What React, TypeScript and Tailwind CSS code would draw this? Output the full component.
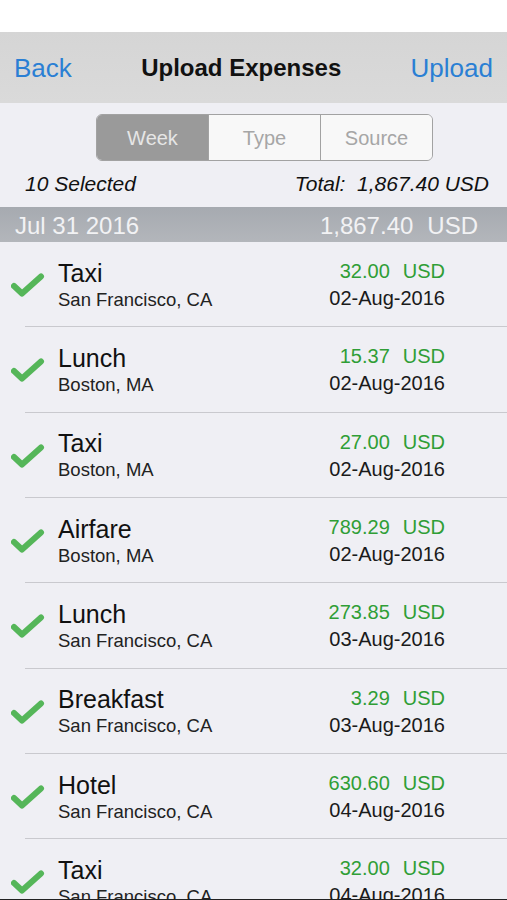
import React from "react";

const rows = [
  { t: "Taxi", s: "San Francisco, CA", a: "32.00", d: "02-Aug-2016" },
  { t: "Lunch", s: "Boston, MA", a: "15.37", d: "02-Aug-2016" },
  { t: "Taxi", s: "Boston, MA", a: "27.00", d: "02-Aug-2016" },
  { t: "Airfare", s: "Boston, MA", a: "789.29", d: "02-Aug-2016" },
  { t: "Lunch", s: "San Francisco, CA", a: "273.85", d: "03-Aug-2016" },
  { t: "Breakfast", s: "San Francisco, CA", a: "3.29", d: "03-Aug-2016" },
  { t: "Hotel", s: "San Francisco, CA", a: "630.60", d: "04-Aug-2016" },
  { t: "Taxi", s: "San Francisco, CA", a: "32.00", d: "04-Aug-2016" },
];

function Check() {
  return (
    <svg width="34" height="24" viewBox="0 0 34 24" className="block">
      <path
        d="M3 13 L11 20.5 L30 3.5"
        fill="none"
        stroke="#55b659"
        strokeWidth="6"
        strokeLinecap="round"
        strokeLinejoin="round"
      />
    </svg>
  );
}

export default function App() {
  return (
    <div
      className="relative w-[507px] h-[900px] overflow-hidden bg-[#efeff4] flex flex-col"
      style={{ fontFamily: '"Liberation Sans", Arial, sans-serif' }}
    >
      <div className="h-[32px] bg-white shrink-0" />
      <div className="h-[71px] shrink-0 flex items-center bg-gradient-to-b from-[#d5d5d5] to-[#dadada] pl-[14px] pr-[14px]">
        <span className="text-[26px] leading-[30px] text-[#2a7fd4]">Back</span>
        <span className="flex-1 text-center text-[24px] leading-[30px] font-bold text-[#111] pt-[1px]">
          Upload Expenses
        </span>
        <span className="text-[26px] leading-[30px] text-[#2a7fd4]">Upload</span>
      </div>

      <div className="shrink-0 flex pl-[96px] pt-[11px]">
        <div className="w-[337px] h-[47px] flex rounded-[6px] border-[1.5px] border-[#a2a2a2] overflow-hidden">
          <div className="w-[111px] flex items-center justify-center bg-[#9a9a9a] text-[20px] leading-[24px] text-[#e6e6e6]">
            Week
          </div>
          <div className="flex-1 flex items-center justify-center bg-[#f8f8f8] border-l-[1.5px] border-[#a2a2a2] text-[20px] leading-[24px] text-[#a6a6a6]">
            Type
          </div>
          <div className="flex-1 flex items-center justify-center bg-[#f8f8f8] border-l-[1.5px] border-[#a2a2a2] text-[20px] leading-[24px] text-[#a6a6a6]">
            Source
          </div>
        </div>
      </div>

      <div className="h-[46px] shrink-0 flex justify-between pl-[25px] pr-[18px] pt-[11px] italic text-[21px] leading-[24px] text-[#111]">
        <span>10 Selected</span>
        <span>Total:&nbsp; 1,867.40 USD</span>
      </div>

      <div className="h-[35px] shrink-0 flex items-center justify-between pl-[15px] pr-[29px] pt-[2px] bg-gradient-to-b from-[#a6aab0] to-[#b3b6bb] text-[24px] leading-[30px] text-[#f2f2f4]">
        <span>Jul 31 2016</span>
        <span className="flex gap-[14px]">
          <span>1,867.40</span>
          <span>USD</span>
        </span>
      </div>

      <div className="flex flex-col">
        {rows.map((r, i) => (
          <div key={i} className="relative h-[85.33px] shrink-0 flex items-center">
            <div className="w-[58px] shrink-0 flex justify-start pl-[11px] pt-[1px]">
              <Check />
            </div>
            <div className="flex-1 flex flex-col">
              <span className="text-[25px] leading-[28px] text-[#111]">{r.t}</span>
              <span className="mt-[2px] text-[18.5px] leading-[22px] text-[#222]">{r.s}</span>
            </div>
            <div className="flex flex-col items-end pr-[62px]">
              <span className="flex gap-[13px] text-[20px] leading-[24px] text-[#2f9e36]">
                <span>{r.a}</span>
                <span>USD</span>
              </span>
              <span className="mt-[3px] text-[20px] leading-[24px] text-[#1a1a1a]">{r.d}</span>
            </div>
            <div className="absolute left-[25px] right-0 bottom-0 h-px bg-[#c9c9ce]" />
          </div>
        ))}
      </div>
      <div className="absolute left-0 right-0 bottom-0 h-px bg-[#222]" />
    </div>
  );
}
